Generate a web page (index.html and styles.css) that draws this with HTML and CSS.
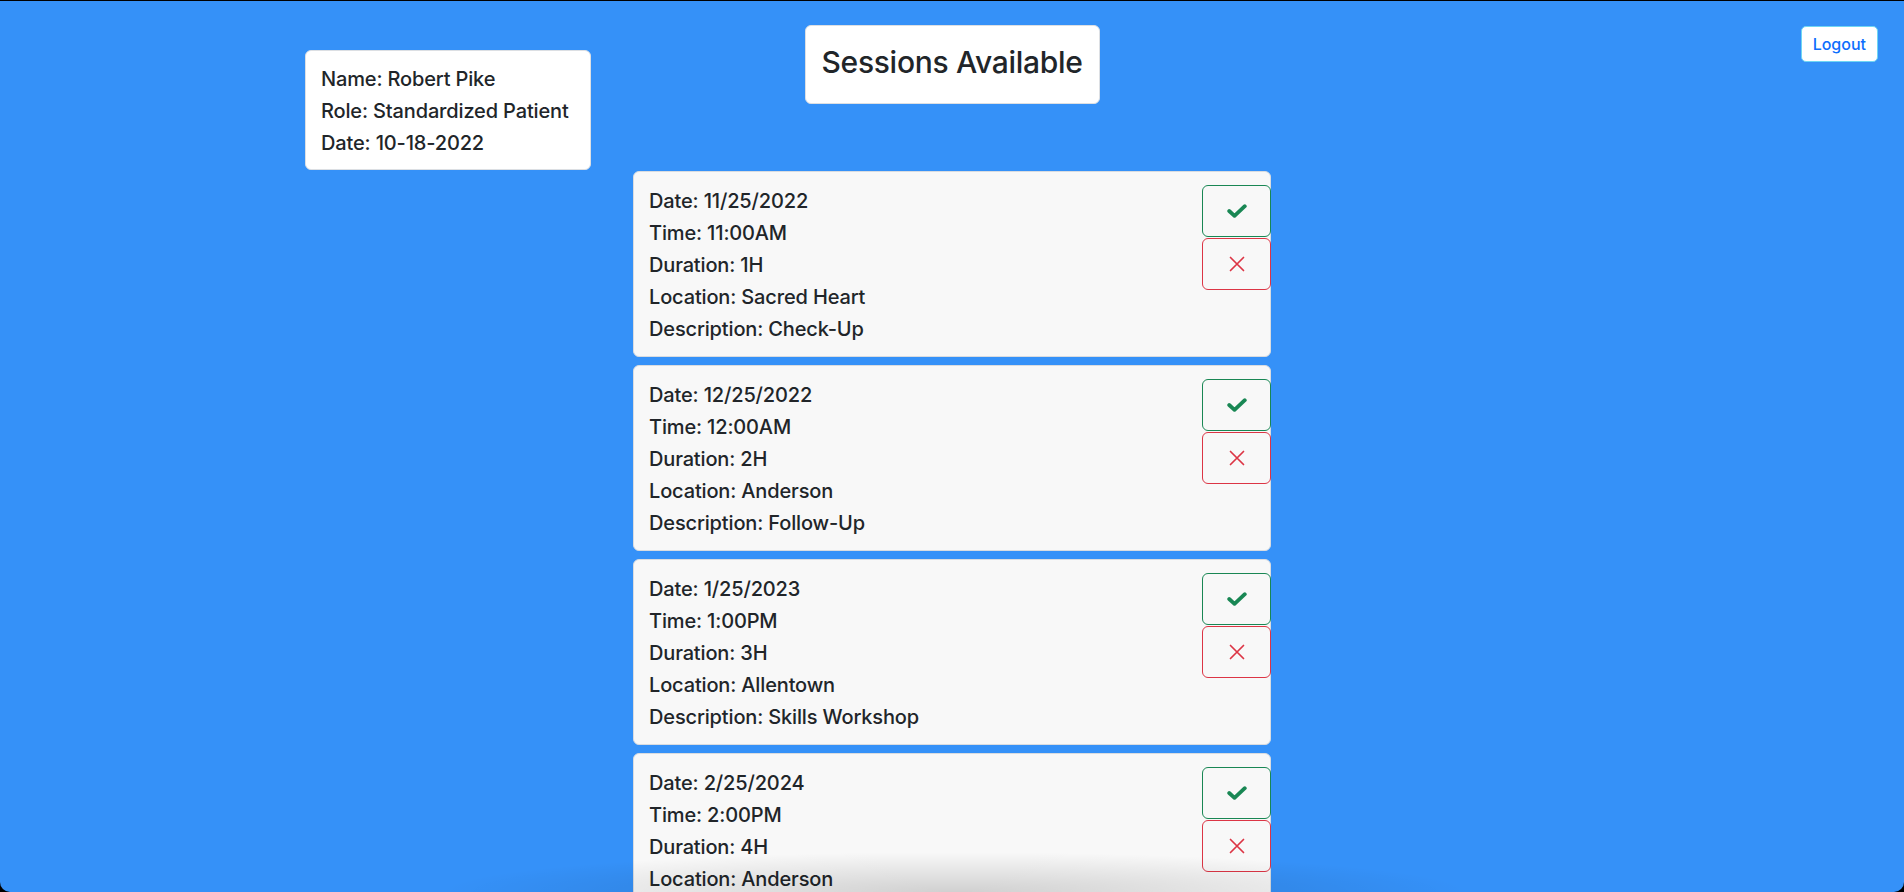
FILE: index.html
```html
<!DOCTYPE html>
<html lang="en">
<head>
<meta charset="utf-8">
<title>Sessions Available</title>
<link rel="stylesheet" href="styles.css">
</head>
<body>
<div class="window">
  <header class="top">
    <div class="top-left">
      <div class="panel info">
        <h5 class="line">Name: Robert Pike</h5>
        <h5 class="line">Role: Standardized Patient</h5>
        <h5 class="line">Date: 10-18-2022</h5>
      </div>
    </div>
    <div class="top-center">
      <div class="panel title-box">
        <h2 class="title">Sessions Available</h2>
      </div>
    </div>
    <div class="top-right">
      <button class="logout">Logout</button>
    </div>
  </header>

  <main class="sessions">
    <div class="session">
      <div class="details">
        <h5 class="line">Date: 11/25/2022</h5>
        <h5 class="line">Time: 11:00AM</h5>
        <h5 class="line">Duration: 1H</h5>
        <h5 class="line">Location: Sacred Heart</h5>
        <h5 class="line">Description: Check-Up</h5>
      </div>
      <div class="actions">
        <button class="act accept"><svg viewBox="0 0 20 14" width="20" height="14"><polyline points="2.2,7 7.5,11.8 17.8,2.2" fill="none" stroke="currentColor" stroke-width="3.8" stroke-linecap="round" stroke-linejoin="round"/></svg></button>
        <button class="act reject"><svg viewBox="0 0 16 16" width="16" height="16"><path d="M1.5 1.5 L14.5 14.5 M14.5 1.5 L1.5 14.5" stroke="currentColor" stroke-width="1.7" stroke-linecap="round"/></svg></button>
      </div>
    </div>
    <div class="session">
      <div class="details">
        <h5 class="line">Date: 12/25/2022</h5>
        <h5 class="line">Time: 12:00AM</h5>
        <h5 class="line">Duration: 2H</h5>
        <h5 class="line">Location: Anderson</h5>
        <h5 class="line">Description: Follow-Up</h5>
      </div>
      <div class="actions">
        <button class="act accept"><svg viewBox="0 0 20 14" width="20" height="14"><polyline points="2.2,7 7.5,11.8 17.8,2.2" fill="none" stroke="currentColor" stroke-width="3.8" stroke-linecap="round" stroke-linejoin="round"/></svg></button>
        <button class="act reject"><svg viewBox="0 0 16 16" width="16" height="16"><path d="M1.5 1.5 L14.5 14.5 M14.5 1.5 L1.5 14.5" stroke="currentColor" stroke-width="1.7" stroke-linecap="round"/></svg></button>
      </div>
    </div>
    <div class="session">
      <div class="details">
        <h5 class="line">Date: 1/25/2023</h5>
        <h5 class="line">Time: 1:00PM</h5>
        <h5 class="line">Duration: 3H</h5>
        <h5 class="line">Location: Allentown</h5>
        <h5 class="line">Description: Skills Workshop</h5>
      </div>
      <div class="actions">
        <button class="act accept"><svg viewBox="0 0 20 14" width="20" height="14"><polyline points="2.2,7 7.5,11.8 17.8,2.2" fill="none" stroke="currentColor" stroke-width="3.8" stroke-linecap="round" stroke-linejoin="round"/></svg></button>
        <button class="act reject"><svg viewBox="0 0 16 16" width="16" height="16"><path d="M1.5 1.5 L14.5 14.5 M14.5 1.5 L1.5 14.5" stroke="currentColor" stroke-width="1.7" stroke-linecap="round"/></svg></button>
      </div>
    </div>
    <div class="session">
      <div class="details">
        <h5 class="line">Date: 2/25/2024</h5>
        <h5 class="line">Time: 2:00PM</h5>
        <h5 class="line">Duration: 4H</h5>
        <h5 class="line">Location: Anderson</h5>
        <h5 class="line">Description: Check-Up</h5>
      </div>
      <div class="actions">
        <button class="act accept"><svg viewBox="0 0 20 14" width="20" height="14"><polyline points="2.2,7 7.5,11.8 17.8,2.2" fill="none" stroke="currentColor" stroke-width="3.8" stroke-linecap="round" stroke-linejoin="round"/></svg></button>
        <button class="act reject"><svg viewBox="0 0 16 16" width="16" height="16"><path d="M1.5 1.5 L14.5 14.5 M14.5 1.5 L1.5 14.5" stroke="currentColor" stroke-width="1.7" stroke-linecap="round"/></svg></button>
      </div>
    </div>
  </main>
  <div class="bottom-shadow"></div>
</div>
</body>
</html>
```

FILE: styles.css
```css
* { box-sizing: border-box; }

html, body {
  margin: 0;
  padding: 0;
  background: #000;
  height: 892px;
  overflow: hidden;
}

body {
  font-family: Inter, "Liberation Sans", sans-serif;
  color: #212529;
}

.window {
  position: relative;
  margin-top: 1px;
  height: 891px;
  background: #3591f8;
  border-radius: 0 0 10px 10px;
  overflow: hidden;
  padding-top: 24px;
}

.top {
  display: grid;
  grid-template-columns: 1fr auto 1fr;
  align-items: start;
}

.top-left {
  padding-left: 305px;
  padding-top: 25px;
}

.top-right {
  display: flex;
  justify-content: flex-end;
  padding-right: 26px;
  padding-top: 1px;
}

.panel {
  background: #fff;
  border: 1px solid #dcdfe3;
  border-radius: 6px;
  padding: 16px;
}

.info {
  display: inline-block;
  width: 286px;
  padding: 16px 15px 14px;
}

.line {
  margin: 0 0 8px 0;
  font-size: 20px;
  font-weight: 500;
  line-height: 24px;
  letter-spacing: -0.15px;
}

.line:last-child { margin-bottom: 0; }

.title-box {
  padding: 17px 16px 16px;
}

.title {
  margin: 0 0 6px 0;
  font-size: 30px;
  font-weight: 500;
  line-height: 38px;
  letter-spacing: -0.3px;
  white-space: nowrap;
}

.logout {
  font-family: inherit;
  font-size: 16px;
  font-weight: 500;
  color: #0d6efd;
  background: #fff;
  border: 1px solid #6fd6f3;
  border-radius: 5px;
  height: 36px;
  padding: 0 11px;
  line-height: 34px;
}

.sessions {
  width: 638px;
  margin: 1px auto 0;
  display: flex;
  flex-direction: column;
  gap: 8px;
}

.session {
  display: flex;
  justify-content: space-between;
  align-items: flex-start;
  background: #f8f8f8;
  border: 1px solid #d9dce0;
  border-radius: 6px;
  padding: 17px 16px 15px 15px;
  flex-shrink: 0;
}

.actions {
  display: flex;
  flex-direction: column;
  margin: -4px -17px 0 0;
}

.act {
  display: flex;
  align-items: center;
  justify-content: center;
  background: transparent;
  border-radius: 6px;
  padding: 0;
  margin: 0;
  width: 69px;
  height: 52px;
}

.act.accept {
  color: #198754;
  border: 1px solid #198754;
}

.act.reject {
  margin-top: 1px;
  color: #dc3545;
  border: 1px solid #dc3545;
}

.bottom-shadow {
  position: absolute;
  left: 440px;
  width: 1030px;
  bottom: 0;
  height: 40px;
  background: radial-gradient(ellipse 50% 100% at 50% 100%, rgba(0, 0, 0, 0.16), rgba(0, 0, 0, 0) 100%);
  pointer-events: none;
}
```
